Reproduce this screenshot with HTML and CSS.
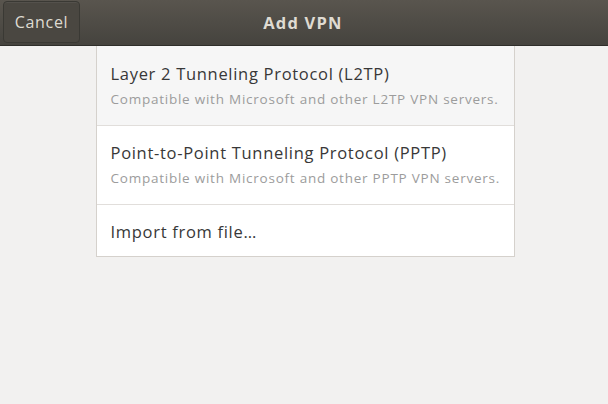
FILE: index.html
```html
<!DOCTYPE html>
<html>
<head>
<meta charset="utf-8">
<link rel="stylesheet" href="styles.css">
</head>
<body>
<div class="window">
  <header class="headerbar">
    <button class="btn">Cancel</button>
    <div class="title">Add VPN</div>
  </header>
  <main class="content">
    <div class="list">
      <div class="row row-hover">
        <div class="row-title">Layer 2 Tunneling Protocol (L2TP)</div>
        <div class="row-sub">Compatible with Microsoft and other L2TP VPN servers.</div>
      </div>
      <div class="row">
        <div class="row-title">Point-to-Point Tunneling Protocol (PPTP)</div>
        <div class="row-sub">Compatible with Microsoft and other PPTP VPN servers.</div>
      </div>
      <div class="row row-single">
        <div class="row-title">Import from file…</div>
      </div>
    </div>
  </main>
</div>
</body>
</html>
```
FILE: styles.css
```css
* { box-sizing: border-box; }
html, body { margin: 0; padding: 0; }
body {
  width: 608px;
  height: 404px;
  overflow: hidden;
  background: #f2f1f0;
  font-family: "Open Sans", "Noto Sans", sans-serif;
}
.window { display: flex; flex-direction: column; height: 404px; }
.headerbar {
  height: 46px;
  position: relative;
  display: flex;
  align-items: center;
  justify-content: center;
  background: linear-gradient(#59554e, #45433e);
  border-bottom: 1px solid #2f2e2a;
  padding: 0 3px;
}
.btn {
  position: absolute;
  left: 3px;
  top: 1px;
  height: 42px;
  width: 77px;
  border: 1px solid #3a3934;
  border-radius: 4px;
  background: #4a4741;
  color: #dfdbd2;
  font-family: inherit;
  font-size: 16px;
  letter-spacing: 0.7px;
  padding: 0;
  box-shadow: inset 0 1px rgba(255,255,255,0.06);
}
.title {
  color: #dfdbd2;
  font-weight: 700;
  font-size: 16.5px;
  letter-spacing: 1.2px;
  margin-right: 2px;
}
.content {
  flex: 1;
  display: flex;
  justify-content: center;
  padding-left: 2px;
}
.list {
  width: 419px;
  height: 211px;
  background: #fff;
  border: 1px solid #d5d1cc;
  border-top: none;
  display: flex;
  flex-direction: column;
}
.row {
  height: 79px;
  padding: 17px 0 0 14px;
  border-bottom: 1px solid #e1dedb;
}
.row-hover { background: #f6f6f6; height: 80px; padding-top: 18px; }
.row-single { border-bottom: none; height: auto; flex: 1; padding-top: 17px; }
.row-title {
  font-size: 16.5px;
  letter-spacing: 0.7px;
  color: #383838;
  line-height: 20px;
}
.row-sub {
  margin-top: 7px;
  font-size: 13.5px;
  letter-spacing: 0.76px;
  color: #9c9c9c;
  line-height: 16px;
}
```
